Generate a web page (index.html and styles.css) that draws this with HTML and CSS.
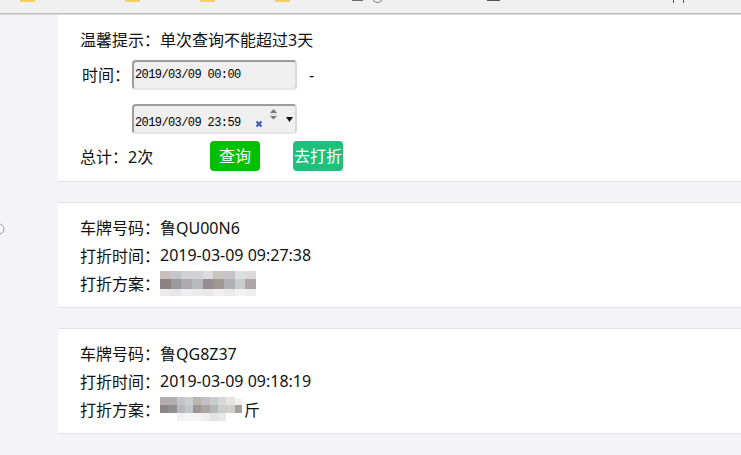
FILE: index.html
```html
<!DOCTYPE html>
<html lang="zh-CN">
<head>
<meta charset="utf-8">
<title>打折记录</title>
<link rel="stylesheet" href="styles.css">
</head>
<body>
<header class="topbar">
  <i class="chip chip-yellow m20"></i>
  <i class="chip chip-yellow m90"></i>
  <i class="chip chip-yellow m60"></i>
  <i class="chip chip-yellow m60"></i>
  <i class="chip chip-gray m62"></i>
  <i class="ring m9"></i>
  <i class="chip chip-dark m104"></i>
  <i class="tick m173"></i>
  <i class="tick m9"></i>
</header>
<div class="page">
  <aside class="side">
    <svg class="radio" width="12" height="12" viewBox="0 0 12 12"><circle cx="6" cy="6" r="5" fill="#fff" stroke="#9a9a9a" stroke-width="1"/></svg>
  </aside>
  <main class="main">
    <section class="card search">
      <p class="tip">温馨提示：单次查询不能超过3天</p>
      <div class="time-grid">
        <span class="label">时间：</span>
        <div class="dt">2019/03/09 00:00</div>
        <span class="dash">-</span>
        <span></span>
        <div class="dt dt-end">
          <span class="dt-text">2019/03/09 23:59</span>
          <svg class="dt-ctrl" width="38" height="20" viewBox="0 0 38 20">
            <path d="M0.5 13.5 L5.5 18.5 M5.5 13.5 L0.5 18.5" stroke="#3b5ea8" stroke-width="2" fill="none"/>
            <polygon points="14,5 21,5 17.5,1" fill="#777"/>
            <line x1="14" y1="6.5" x2="21" y2="6.5" stroke="#d6d6d6" stroke-width="1"/>
            <polygon points="14,8 21,8 17.5,11.5" fill="#777"/>
            <polygon points="30,9 37,9 33.5,14" fill="#111"/>
          </svg>
        </div>
      </div>
      <div class="total-row">
        <span class="total">总计：2次</span>
        <button class="btn btn-query">查询</button>
        <button class="btn btn-discount">去打折</button>
      </div>
    </section>

    <section class="card record">
      <div class="row"><span class="k">车牌号码：</span><span>鲁QU00N6</span></div>
      <div class="row"><span class="k">打折时间：</span><span>2019-03-09 09:27:38</span></div>
      <div class="row"><span class="k">打折方案：</span>
        <svg class="mosaic" width="96" height="25" viewBox="0 0 96 25" shape-rendering="crispEdges">
          <rect x="0" y="0" width="11" height="8" fill="#c9bfbf"/>
          <rect x="11" y="0" width="10" height="8" fill="#c3c6cb"/>
          <rect x="21" y="0" width="11" height="8" fill="#d2d2d4"/>
          <rect x="32" y="0" width="11" height="8" fill="#d3d3d3"/>
          <rect x="43" y="0" width="10" height="8" fill="#dcdcde"/>
          <rect x="53" y="0" width="11" height="8" fill="#c8c4be"/>
          <rect x="64" y="0" width="11" height="8" fill="#c7c2c7"/>
          <rect x="75" y="0" width="10" height="8" fill="#dadfdf"/>
          <rect x="85" y="0" width="11" height="8" fill="#dfdada"/>
          <rect x="0" y="8" width="11" height="10" fill="#8d8383"/>
          <rect x="11" y="8" width="10" height="10" fill="#9a9a9d"/>
          <rect x="21" y="8" width="11" height="10" fill="#aea9ad"/>
          <rect x="32" y="8" width="11" height="10" fill="#b6babd"/>
          <rect x="43" y="8" width="10" height="10" fill="#958d92"/>
          <rect x="53" y="8" width="11" height="10" fill="#a09894"/>
          <rect x="64" y="8" width="11" height="10" fill="#b1b1b5"/>
          <rect x="75" y="8" width="10" height="10" fill="#c8cccb"/>
          <rect x="85" y="8" width="11" height="10" fill="#ada5a7"/>
          <rect x="0" y="18" width="11" height="7" fill="#ebe9e9"/>
          <rect x="11" y="18" width="10" height="7" fill="#e6e6e8"/>
          <rect x="21" y="18" width="11" height="7" fill="#eeeeee"/>
          <rect x="32" y="18" width="11" height="7" fill="#ececec"/>
          <rect x="43" y="18" width="10" height="7" fill="#e9e9e9"/>
          <rect x="53" y="18" width="11" height="7" fill="#f0f0f0"/>
          <rect x="64" y="18" width="11" height="7" fill="#eaeaea"/>
          <rect x="75" y="18" width="10" height="7" fill="#f2f2f2"/>
          <rect x="85" y="18" width="11" height="7" fill="#f0efef"/>
        </svg>
      </div>
    </section>

    <section class="card record">
      <div class="row"><span class="k">车牌号码：</span><span>鲁QG8Z37</span></div>
      <div class="row"><span class="k">打折时间：</span><span>2019-03-09 09:18:19</span></div>
      <div class="row"><span class="k">打折方案：</span>
        <svg class="mosaic" width="84" height="24" viewBox="0 0 84 24" shape-rendering="crispEdges">
          <rect x="0" y="0" width="8" height="8" fill="#b3adae"/>
          <rect x="8" y="0" width="9" height="8" fill="#adafb2"/>
          <rect x="17" y="0" width="8" height="8" fill="#c4c3c6"/>
          <rect x="25" y="0" width="8" height="8" fill="#cbcdd0"/>
          <rect x="33" y="0" width="8" height="8" fill="#bab5b1"/>
          <rect x="41" y="0" width="9" height="8" fill="#c3c1c6"/>
          <rect x="50" y="0" width="8" height="8" fill="#cacccb"/>
          <rect x="58" y="0" width="8" height="8" fill="#d8d8d4"/>
          <rect x="66" y="0" width="9" height="8" fill="#e4e4e2"/>
          <rect x="75" y="2" width="7" height="6" fill="#eeeeee"/>
          <rect x="0" y="8" width="8" height="8" fill="#8c8687"/>
          <rect x="8" y="8" width="9" height="8" fill="#918f92"/>
          <rect x="17" y="8" width="8" height="8" fill="#b7b9bc"/>
          <rect x="25" y="8" width="8" height="8" fill="#c1c7cb"/>
          <rect x="33" y="8" width="8" height="8" fill="#9e9597"/>
          <rect x="41" y="8" width="9" height="8" fill="#aaa5a1"/>
          <rect x="50" y="8" width="8" height="8" fill="#b5b9b9"/>
          <rect x="58" y="8" width="8" height="8" fill="#cbcfcd"/>
          <rect x="66" y="8" width="9" height="8" fill="#cfcfcb"/>
          <rect x="75" y="8" width="7" height="8" fill="#a8a0a1"/>
          <rect x="17" y="16" width="8" height="8" fill="#f1f1f1"/>
          <rect x="25" y="16" width="8" height="8" fill="#f5f5f5"/>
          <rect x="33" y="16" width="8" height="8" fill="#f3f3f3"/>
          <rect x="41" y="16" width="9" height="8" fill="#eeeeee"/>
          <rect x="50" y="16" width="8" height="8" fill="#e3e3e3"/>
          <rect x="58" y="16" width="8" height="8" fill="#e8e8e8"/>
        </svg><span class="tail">斤</span>
      </div>
    </section>
  </main>
</div>
</body>
</html>
```

FILE: styles.css
```css
* { box-sizing: border-box; }

html, body {
  margin: 0;
  padding: 0;
  height: 100%;
}

body {
  background: #f4f4f8;
  font-family: "Noto Sans", "Noto Sans CJK SC", sans-serif;
  font-size: 16px;
  color: #111;
  overflow: hidden;
}

/* ---------- top browser strip ---------- */
.topbar {
  position: relative;
  z-index: 1;
  height: 14px;
  background: #f0f0f0;
  border-bottom: 1px solid #bdbdbd;
  box-shadow: 0 1px 0 #dadada;
  display: flex;
  align-items: flex-start;
  overflow: hidden;
}

.chip { display: block; height: 2px; width: 15px; }
.chip-yellow { background: #f4cf62; }
.chip-gray { width: 11px; height: 1px; background: #6e6e6e; }
.chip-dark { width: 13px; height: 1px; background: #555; }
.ring {
  display: block;
  width: 11px;
  height: 11px;
  margin-top: -8px;
  border: 1px solid #7a7a7a;
  border-radius: 50%;
}
.tick { display: block; width: 1px; height: 3px; background: #555; }

.m9 { margin-left: 9px; }
.m20 { margin-left: 20px; }
.m60 { margin-left: 60px; }
.m62 { margin-left: 62px; }
.m90 { margin-left: 90px; }
.m104 { margin-left: 104px; }
.m173 { margin-left: 173px; }

/* ---------- page ---------- */
.page {
  display: flex;
  min-height: calc(100% - 14px);
}

.side {
  position: relative;
  width: 58px;
  flex: 0 0 58px;
}

.radio {
  position: absolute;
  left: -7px;
  top: 209px;
}

.main {
  flex: 1;
}

.card {
  background: #fff;
  padding: 0 22px;
}

/* ---------- search card ---------- */
.search {
  padding-top: 12px;
  padding-bottom: 10px;
  border-bottom: 1px solid #e2e2e2;
}

.tip {
  margin: 0;
  line-height: 28px;
}

.time-grid {
  margin-top: 6px;
  display: grid;
  grid-template-columns: 50px 165px auto;
  column-gap: 2px;
  row-gap: 14px;
  align-items: center;
}

.label {
  padding-left: 2px;
  line-height: 30px;
}

.dash {
  margin-left: 10px;
  line-height: 30px;
}

.dt {
  height: 30px;
  display: flex;
  align-items: center;
  padding-left: 1px;
  background: #efefef;
  border: 2px solid;
  border-color: #9c9c9c #d9d9d9 #e6e6e6 #9c9c9c;
  border-radius: 4px;
  font-family: "Liberation Mono", monospace;
  font-size: 12px;
  letter-spacing: -0.6px;
  line-height: 13px;
  color: #000;
}

.dt-end {
  align-items: flex-start;
  padding-top: 11px;
}

.dt-ctrl {
  display: block;
  margin-left: 15px;
  margin-top: -9px;
}

.total-row {
  margin-top: 7px;
  height: 30px;
  display: flex;
  align-items: center;
}

.total {
  width: 130px;
}

.btn {
  width: 50px;
  height: 30px;
  padding: 0;
  border: 0;
  border-radius: 4px;
  color: #fff;
  font-family: inherit;
  font-size: 16px;
  line-height: 30px;
  white-space: nowrap;
  overflow: visible;
}

.btn-query { background: #00c000; }
.btn-discount { background: #1fc07b; margin-left: 33px; }

/* ---------- record cards ---------- */
.record {
  margin-top: 20px;
  padding-top: 10px;
  padding-bottom: 10px;
  border-top: 1px solid #e2e2e2;
  border-bottom: 1px solid #e2e2e2;
}

.row {
  display: flex;
  align-items: center;
  height: 28px;
  white-space: nowrap;
}

.k {
  width: 80px;
  flex: 0 0 80px;
}

.mosaic {
  display: block;
}
```
